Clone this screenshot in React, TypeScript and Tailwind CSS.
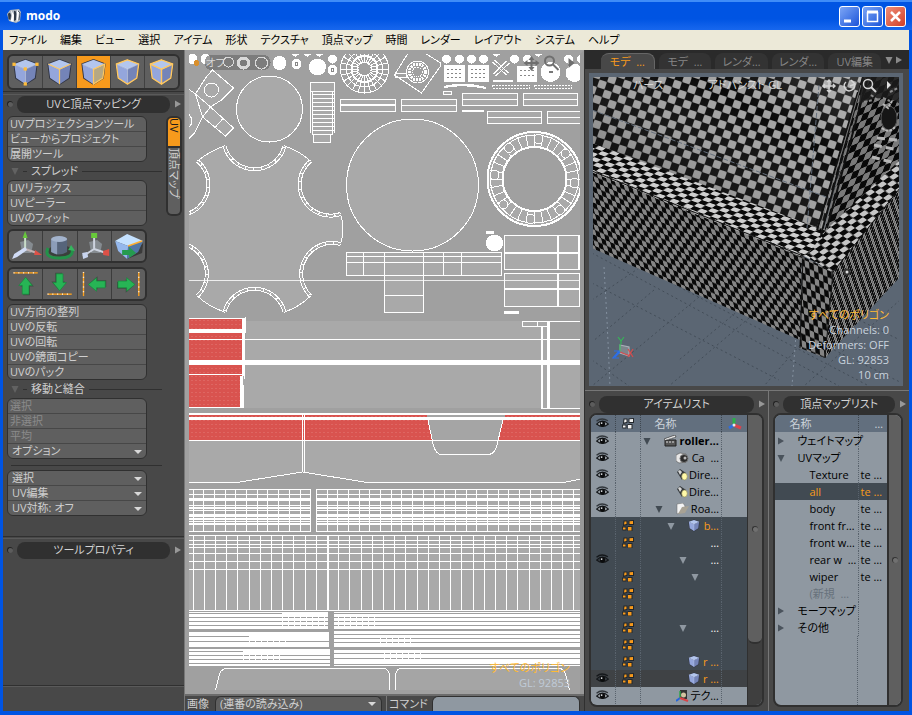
import React from 'react';

const menus = [
  'ファイル', '編集', 'ビュー', '選択', 'アイテム', '形状', 'テクスチャ',
  '頂点マップ', '時間', 'レンダー', 'レイアウト', 'システム', 'ヘルプ',
];

type CubeMode = 'vertex' | 'edge' | 'polygon' | 'item' | 'material' | 'plain';

const Cube = ({ mode, className }: { mode: CubeMode; className: string }) => (
  <svg viewBox="0 0 28 30" className={className} aria-hidden="true">
    <path d="M14 1 27 6 25 22 14 29 3 22 1 6Z" fill="#2f3342" />
    <path d="M14 2 26 6.500 14 12 2 6.500Z" fill="#b3c6ee" />
    <path d="M2 6.500 14 12V28L4 21.500Z" fill="#94a6dc" />
    <path d="M26 6.500 14 12V28L24 21.500Z" fill={mode === 'polygon' ? '#b5a884' : '#7484b8'} />
    <path d="M2 6.500 14 12 26 6.500M14 12V28" fill="none" stroke="#dce6fa" strokeWidth="0.6" />
    {mode === 'vertex' && (
      <g fill="#ffbd3a">
        <rect x="0" y="5" width="3.500" height="3.500" />
        <rect x="24.500" y="5" width="3.500" height="3.500" />
        <rect x="12" y="10" width="3.500" height="3.500" />
        <rect x="12" y="26" width="3.500" height="3.500" />
      </g>
    )}
    {mode === 'edge' && <path d="M2 6.500 14 12 26 6.500M14 12V28" fill="none" stroke="#ffc860" strokeWidth="1.300" />}
    {mode === 'polygon' && <path d="M26 6.500 14 12V28L24 21.500Z" fill="none" stroke="#ffc860" strokeWidth="1.300" />}
    {(mode === 'item' || mode === 'material') && (
      <path d="M14 2 26 6.500 24 21.500 14 28 4 21.500 2 6.500Z" fill="none" stroke="#ffc860" strokeWidth="1.500" />
    )}
    {mode === 'material' && <path d="M2 6.500 14 12 26 6.500M14 12V28" fill="none" stroke="#ffc860" strokeWidth="1.500" />}
  </svg>
);

const Eye = ({ dark = false }: { dark?: boolean }) => (
  <svg viewBox="0 0 12 10" className="mx-auto block h-[11px] w-[13px]" role="img" aria-label="visible">
    <path d="M0.500 3Q5-1 11 2.500" fill="none" stroke={dark ? '#15181b' : '#33383d'} strokeWidth="1.2" />
    <path d="M0.500 5.500Q6 0 11.500 5.500 6 10 0.500 5.500Z" fill={dark ? '#3a4046' : '#aab0b6'} stroke="#15181b" />
    <circle cx="6" cy="5.400" r="2.500" fill="#0b0c0d" />
    <circle cx="5.200" cy="4.600" r="0.800" fill="#e6e9ec" />
  </svg>
);

const Blocks = ({ color }: { color: string }) => (
  <svg viewBox="0 0 12 12" className="mx-auto block size-3" aria-hidden="true">
    <path d="M1.500 0.500H5.500V5L1 6ZM6.500 0.500 12 0V5H6.500ZM0 6.500H4.500V10.500H0.500ZM5.500 6H10.500V11H5.500Z" fill="#23272b" />
    <path d="M2.500 1.500H4.500V4L2 4.500ZM7.500 1.200 11 1V4H7.500ZM1 7.500H3.500V9.500H1ZM6 7H9.500V10.500H6Z" fill={color} />
  </svg>
);

const Axis = () => (
  <svg viewBox="0 0 14 12" className="mx-auto block h-3 w-3.5" aria-hidden="true">
    <path d="M6 0V7" stroke="#2bb04b" strokeWidth="3" />
    <path d="M6 7 1 10" stroke="#2f6fe0" strokeWidth="3" />
    <path d="M6 7 13 10" stroke="#d8434d" strokeWidth="3" />
    <circle cx="6" cy="7" r="1.500" fill="#e3e9ee" />
  </svg>
);

const Triangle = ({ open, className }: { open: boolean; className: string }) => (
  <svg viewBox="0 0 8 8" className={`size-2 shrink-0 ${className}`} aria-hidden="true">
    <path d={open ? 'M0.500 1H7.500L4 8Z' : 'M1 0.500 7 4 1 7.500Z'} fill="currentColor" />
  </svg>
);

const PanelTitle = ({ text }: { text: string }) => (
  <div className="flex h-[18px] shrink-0 items-center gap-1 pr-0.5 pl-1">
    <span className="size-1.5 shrink-0 rounded-full border-t border-l border-[#222] bg-[#5c5c5c]" />
    <h2 className="h-[17px] min-w-0 flex-1 rounded-lg bg-[#303030] text-center text-[11px] leading-4 whitespace-nowrap text-[#d4d4d4]">{text}</h2>
    <Triangle open={false} className="text-[#989898]" />
  </div>
);

const groupClass = 'mx-1 w-[140px] rounded-md border border-[#303030] bg-[#5f5f5f] text-[11px] leading-[14px] text-[#cfcfcf]';

const CommandGroup = ({ items }: { items: string[] }) => (
  <div className={groupClass}>
    {items.map((item) => (
      <button
        key={item}
        type="button"
        className="block h-[15px] w-full border-b border-[#474747] px-0.5 text-left whitespace-nowrap last:h-3.5 last:border-b-0"
      >
        {item}
      </button>
    ))}
  </div>
);

const DropRow = ({ label }: { label: string }) => (
  <div className="relative h-[15px] border-b border-[#474747] last:h-3.5 last:border-b-0">
    <select aria-label={label} className="block h-3.5 w-full appearance-none px-1 leading-[14px] outline-none">
      <option>{label}</option>
    </select>
    <svg viewBox="0 0 8 4" className="pointer-events-none absolute top-1.5 right-1 h-1 w-2" aria-hidden="true">
      <path d="M0 0H8L4 4Z" fill="#d8d8d8" />
    </svg>
  </div>
);

const Section = ({ text }: { text: string }) => (
  <div className="mr-1 ml-2 flex h-3.5 items-center gap-1 text-[#cfcfcf]">
    <Triangle open className="text-[#626262]" />
    <span className="h-px w-1 bg-[#303030]" />
    <h3 className="text-[11px] leading-[14px]">{text}</h3>
    <span className="h-px flex-1 bg-[#303030]" />
  </div>
);

const modes: CubeMode[] = ['vertex', 'edge', 'polygon', 'item', 'material'];

const toolIcons = [
  {
    name: '軸',
    art: (
      <>
        <path d="M11 11 19 9 24 13 22 22 13 22Z" fill="#858b90" />
        <path d="M16 18V4" stroke="#c8dcc8" strokeWidth="2" />
        <path d="M13.500 7 16 0 18.500 7Z" fill="#67c83c" />
        <path d="M16 18 28 22" stroke="#c1b2b2" strokeWidth="2" />
        <path d="M26 19 33 24 25 24Z" fill="#dc5147" />
        <path d="M16 16 5 23 3 28 8 26 18 19Z" fill="#d1dcf6" />
      </>
    ),
  },
  {
    name: '円筒',
    art: (
      <>
        <ellipse cx="17" cy="20" rx="12" ry="6" fill="#3a403b" />
        <path d="M5 17Q0 27 16 27 31 27 29 18" fill="none" stroke="#239149" strokeWidth="3" />
        <path d="M8 8V21Q15 26 24 21V8Z" fill="#56647a" />
        <path d="M8 8V21L14 23.500V9Z" fill="#8c9db9" />
        <ellipse cx="16" cy="8" rx="8" ry="3" fill="#a3b3cc" />
        <path d="M25 19 28 14 32 20Z" fill="#36b55e" />
      </>
    ),
  },
  {
    name: '拡大縮小',
    art: (
      <>
        <path d="M11 11 19 9 24 13 22 22 13 22Z" fill="#858b90" />
        <path d="M16 18V4M16 18 28 22M16 18 5 25" stroke="#cdd3df" strokeWidth="2" />
        <rect x="13" y="2" width="6" height="5" fill="#68ca3a" />
        <path d="M25 20 31 18V25L25 24Z" fill="#dc5147" />
        <path d="M4 22 9 21 10 26 5 28Z" fill="#c8d4ee" />
      </>
    ),
  },
  {
    name: '移動',
    art: (
      <>
        <path d="M15 28 30 22 31 12Z" fill="#3a3a3a" />
        <path d="M3 10 15 3 31 10 16 15Z" fill="#c4e1ff" />
        <path d="M3 10 16 15 15 28 6 20Z" fill="#94b7ec" />
        <path d="M31 10 16 15 15 28 26 21Z" fill="#5276a6" />
        <path d="M16 15 30 10" stroke="#ffad2d" strokeWidth="1.500" />
        <path d="M10 19H17V16L24 22 17 27V24H10Z" fill="#259b4e" />
      </>
    ),
  },
];

const arrows = [
  { name: '上揃え', turn: 0, guide: 'M4 4H29', x: 0, y: 1 },
  { name: '下揃え', turn: 180, guide: 'M4 26H29', x: 0, y: -2 },
  { name: '左揃え', turn: 270, guide: 'M5 3V28', x: 2, y: 0 },
  { name: '右揃え', turn: 90, guide: 'M27 3V28', x: -2, y: 0 },
];

const LeftPanel = () => (
  <aside className="flex w-[182px] shrink-0 flex-col border-r border-[#777] bg-[#484848]">
    <div className="mx-1 mt-1 flex h-[36px] shrink-0 rounded-md border-2 border-[#303030] bg-[#5f5f5f]">
      {modes.map((mode) => (
        <button
          key={mode}
          type="button"
          aria-label={mode}
          className={`flex flex-1 items-center justify-center border-r border-[#414141] last:border-r-0 ${mode === 'polygon' ? 'bg-[#f79a1c]' : ''}`}
        >
          <Cube mode={mode} className="h-[28px] w-[27px]" />
        </button>
      ))}
    </div>
    <div className="mt-px h-1 shrink-0 border-t border-b border-t-[#303030] border-b-[#5a5a5a]" />
    <PanelTitle text="UVと頂点マッピング" />
    <div className="flex items-start pt-[3px]">
      <div className="flex min-w-0 flex-1 flex-col gap-0.5">
        <CommandGroup items={['UVプロジェクションツール', 'ビューからプロジェクト', '展開ツール']} />
        <Section text="スプレッド" />
        <CommandGroup items={['UVリラックス', 'UVピーラー', 'UVのフィット']} />
        <div className="mx-1 my-px flex h-[34px] w-[140px] rounded-md border-2 border-[#303030] bg-[#5f5f5f]">
          {toolIcons.map((tool) => (
            <button key={tool.name} type="button" aria-label={tool.name} className="flex-1 border-r border-[#3c3c3c] last:border-r-0">
              <svg viewBox="0 0 33 30" className="h-[30px] w-full">{tool.art}</svg>
            </button>
          ))}
        </div>
        <div className="mx-1 my-px flex h-[34px] w-[140px] rounded-md border-2 border-[#303030] bg-[#5f5f5f]">
          {arrows.map((a) => (
            <button key={a.name} type="button" aria-label={a.name} className="flex-1 border-r border-[#3c3c3c] last:border-r-0">
              <svg viewBox="0 0 33 31" className="h-[30px] w-full">
                <path d={a.guide} stroke="#ffa21d" strokeWidth="1.400" />
                <path d={a.guide} stroke="#fff" strokeWidth="1.400" strokeDasharray="1 4" />
                <g transform={`translate(${a.x} ${a.y}) rotate(${a.turn} 16.5 16)`}>
                  <path d="M18 9 25 17H21V26H14V17H11Z" fill="#303830" opacity=".6" />
                  <path d="M16.500 7.500 23.500 16H20V25H13V16H9.500Z" fill="#27b455" stroke="#168a3d" strokeWidth=".7" />
                </g>
              </svg>
            </button>
          ))}
        </div>
        <CommandGroup items={['UV方向の整列', 'UVの反転', 'UVの回転', 'UVの鏡面コピー', 'UVのパック']} />
        <Section text="移動と縫合" />
        <div className={groupClass}>
          {['選択', '非選択', '平均'].map((item) => (
            <button key={item} type="button" disabled className="block h-[15px] w-full border-b border-[#474747] px-0.5 text-left text-[#8b8b8b]">
              {item}
            </button>
          ))}
          <DropRow label="オプション" />
        </div>
        <div className="mt-1 mr-1 mb-0.5 ml-2 h-px bg-[#303030]" />
        <div className={groupClass}>
          <DropRow label="選択" />
          <DropRow label="UV編集" />
          <DropRow label="UV対称: オフ" />
        </div>
      </div>
      <div className="mr-0.5 flex w-4 shrink-0 flex-col text-[11px] leading-3" role="tablist">
        <button type="button" role="tab" aria-selected="true" className="flex h-8 items-center rounded-t-md border-2 border-[#303030] bg-[#f79a1c] py-0.5 text-[#1c1c1c] [text-orientation:sideways] [writing-mode:vertical-rl]">UV</button>
        <button type="button" role="tab" aria-selected="false" className="flex h-[68px] items-center rounded-b-md border-2 border-t-0 border-[#303030] bg-[#5f5f5f] py-1 text-[#cfcfcf] [text-orientation:sideways] [writing-mode:vertical-rl]">頂点マップ</button>
      </div>
    </div>
    <div className="mt-5 mb-0.5 h-[3px] shrink-0 border-t border-b border-t-[#303030] border-b-[#5a5a5a]" />
    <PanelTitle text="ツールプロパティ" />
    <div className="flex-1" />
    <div className="mb-6 h-0.5 border-t border-b border-t-[#303030] border-b-[#5a5a5a]" />
  </aside>
);

const range = (n: number) => Array.from({ length: n }, (_, i) => i);

const notches = [
  'M225 146A31 31 0 0 0 285 146',
  'M311 161A31 31 0 0 0 341 214',
  'M341 244A31 31 0 0 0 311 296',
  'M285 312A31 31 0 0 0 225 312',
  'M198 296A31 31 0 0 0 168 244',
  'M168 214A31 31 0 0 0 198 161',
];

const UvCanvas = () => (
  <svg viewBox="189 54 392 640" preserveAspectRatio="xMidYMid slice" className="h-full w-full" shapeRendering="crispEdges" role="img" aria-label="UV layout">
    <defs>
      <pattern id="redDots" width="4" height="4" patternUnits="userSpaceOnUse">
        <rect width="4" height="4" fill="#d9534f" />
        <rect width="1" height="1" fill="#e27a74" />
      </pattern>
    </defs>
    <rect x="189" y="54" width="392" height="640" fill="#a0a0a0" />

    {/* small parts along the top */}
    <g fill="#fff">
      <circle cx="193" cy="59" r="5" />
      <circle cx="206" cy="59" r="5" />
      <circle cx="280" cy="63" r="7" />
      <circle cx="297" cy="64" r="5" />
      <circle cx="318" cy="67" r="8.5" />
      <circle cx="333" cy="59" r="4.5" />
      <circle cx="333" cy="70" r="5" />
      <path d="M292 54H300L296 57ZM304 54H312L308 57ZM316 54H324L320 57Z" />
      {[447, 460, 472, 484, 515, 528, 569, 582].map((x) => <circle key={x} cx={x} cy="59" r="4.5" />)}
      <rect x="444" y="65" width="21" height="17" />
      <rect x="468" y="65" width="21" height="17" />
      <rect x="517" y="66" width="20" height="16" />
      <circle cx="551" cy="72" r="10" />
      <circle cx="575" cy="73" r="9" />
      <path d="M444 86Q465 81 487 87L486 89Q465 84 445 88ZM493 80H513V82H493ZM493 54H501L497 57ZM535 54H543L539 57Z" />
    </g>
    <circle cx="197" cy="63" r="3" fill="#d98f2c" />
    <circle cx="297" cy="64" r="1.5" fill="none" stroke="#888" />
    <circle cx="333" cy="70" r="1.5" fill="none" stroke="#888" />
    <path d="M447 69H462M447 73H462M447 77H462M471 69H486M471 73H486M471 77H486M520 70H534M520 75H534" stroke="#888" strokeDasharray="2 2" />
    <rect x="549" y="71" width="4" height="2" fill="#777" />
    <g fill="none" stroke="#fff">
      <path d="M493 62 507 75M495 60 509 73M507 61 494 74M510 63 496 76" />
      <path d="M493 85H530V88H493ZM535 85H572V88H535Z" strokeDasharray="2 1" />
      <circle cx="365" cy="69" r="24" />
      <circle cx="365" cy="69" r="18" />
      <circle cx="365" cy="69" r="13" strokeWidth="2" />
      <circle cx="365" cy="69" r="7" />
      {range(24).map((i) => <path key={i} d="M365 63V45" transform={`rotate(${i * 15} 365 69)`} />)}
      <path d="M408 54 395 75 422 93 441 66V63L427 54M396 73H407V77H396Z" />
      <circle cx="418" cy="72" r="11" />
      <circle cx="418" cy="72" r="8" strokeWidth="3" strokeDasharray="2 1" />
      <circle cx="418" cy="72" r="5" strokeDasharray="1 1" />
    </g>
    <rect x="205" y="55" width="66" height="15" rx="7" fill="#686868" opacity=".65" />
    <text x="206" y="67" fontSize="11" fill="#d4d4d4">オフ</text>
    <g fill="none" stroke="#d9d9d9">
      <circle cx="229" cy="62" r="5" />
      <circle cx="244" cy="63" r="5" strokeWidth="3" />
      <circle cx="262" cy="63" r="6" />
    </g>

    {/* rotated cross and the two upper discs */}
    <g fill="#a9a9a9" stroke="#fff">
      <path d="M189 89 196 94 206 78 213 70 234 88 222 100 211 107 234 128 226 136 203 117 195 133 189 139" />
      <path d="M196 94 203 117 211 107M196 94 211 107M216 127 224 118" fill="none" />
      <circle cx="212" cy="90" r="7" />
      <path d="M189 114Q196 121 189 128" />
      <circle cx="270" cy="109" r="33" />
      <circle cx="413" cy="185" r="66" />
    </g>

    {/* ladder */}
    <g fill="#a9a9a9" stroke="#fff">
      <path d="M311 82H335V91H311ZM313 91H333V134H313ZM314 134H331V142H314Z" />
      <path d="M313 94H334M313 98H334M313 102H334M313 106H334M313 110H334M313 114H334M313 118H334M313 122H334M313 126H334M313 130H334" />
      <path d="M311 91V133M335 91V133" fill="none" />
    </g>

    {/* strips */}
    <g fill="#a9a9a9" stroke="#fff">
      <path d="M341 99H396V111H341ZM341 104H396M402 99H457V111H402ZM402 105H457M463 93H518V105H463ZM463 99H518M524 93H578V105H524ZM524 99H578M488 111H542V123H488ZM488 117H542M548 111H582V123H548ZM548 117H582M444 91H452V94H444Z" />
      <path d="M462 111H484M341 105H396" strokeWidth="2" />
    </g>

    {/* star plate */}
    <path
      d="M198 161Q210 151 225 146A31 31 0 0 0 285 146Q300 151 311 161A31 31 0 0 0 341 214Q346 229 341 244A31 31 0 0 0 311 296Q300 307 285 312A31 31 0 0 0 225 312Q208 306 198 296A31 31 0 0 0 168 244V214A31 31 0 0 0 198 161Z"
      fill="#a9a9a9"
      stroke="#fff"
    />
    {notches.map((d) => (
      <g key={d} fill="none">
        <path d={d} stroke="#fff" strokeWidth="4" />
        <path d={d} stroke="#a9a9a9" strokeWidth="2" strokeDasharray="7 1" />
      </g>
    ))}

    {/* bolt ring */}
    <g fill="none" stroke="#fff">
      <circle cx="535" cy="179" r="40" stroke="#a9a9a9" strokeWidth="15" />
      <circle cx="535" cy="179" r="47" strokeWidth="2" />
      <circle cx="535" cy="179" r="44" />
      <circle cx="535" cy="179" r="32" strokeWidth="2" />
      {range(32).map((i) => <path key={i} d="M535 147V134" transform={`rotate(${i * 11.25} 535 179)`} />)}
      {range(8).map((i) => <circle key={i} cx="539" cy="139" r="4.5" fill="#a9a9a9" transform={`rotate(${i * 45} 535 179)`} />)}
    </g>

    {/* tables */}
    <g fill="#a9a9a9" stroke="#fff">
      <path d="M347 252H502V275H347ZM347 256H502M347 262H502M364 252V275M385 252V275M424 252V275M444 252V275M462 252V275M385 275V312H424V275M385 295H424" />
      <path d="M505 235H580V269H505ZM505 273H580V306H505Z" />
      <path d="M505 253H580M558 235V269M505 289H580M558 273V306M579 235V269" strokeWidth="2" />
      <path d="M487 231H494V233H487ZM505 311H519V313H505Z" fill="#fff" />
      <circle cx="495" cy="243" r="8" fill="#fff" />
    </g>
    <path d="M189 280.5H581" stroke="#fff" opacity=".8" />

    {/* wide panels and selection */}
    <rect x="189" y="339" width="392" height="69" fill="#a9a9a9" />
    <rect x="246" y="321" width="301" height="87" fill="#a9a9a9" />
    <path d="M189 318H242V407H189Z" fill="url(#redDots)" />
    <g fill="none" stroke="#fff">
      <path d="M189 318.5H244M189 339.5H581M189 374.5H242M189 407.5H242M523 321.5H581M523 321V326H548M538 321V326M541 408.5H581" />
      <path d="M189 331H244" strokeWidth="4" />
      <path d="M189 362.5H581" strokeWidth="5" />
      <path d="M244 318V376M242 376V408M549 321V408" strokeWidth="3" />
      <path d="M542 326V408" strokeWidth="2" />
      <path d="M246 317V333M245 371V379M244 385V408" />
    </g>
    <rect x="189" y="413" width="392" height="70" fill="#a9a9a9" />
    <path d="M189 482H237L303 472 368 482H564L581 479V489H189Z" fill="#a0a0a0" />
    <path d="M189 413H581V440H189Z" fill="url(#redDots)" />
    <path d="M427 413H506L496 449Q494 455 490 455H441Q437 454 435 449Z" fill="#a5a5a5" />
    <g fill="none" stroke="#fff">
      <path d="M189 414H581" strokeWidth="2" />
      <path d="M189 418.500H581" strokeWidth="3" />
      <path d="M189 440.500H581M302.500 413V472M304.500 413V472M189 482.500H237L303 472 368 482.500H564L581 479" />
      <path d="M428 418 434 446Q437 454 441 454.500H490Q495 453 497 447L504 418" />
    </g>

    {/* dense strips */}
    <rect x="189" y="489" width="122" height="43" fill="#a9a9a9" />
    <rect x="316" y="489" width="265" height="43" fill="#a9a9a9" />
    <g fill="none" stroke="#fff">
      {[
        { x: 189, w: 122 },
        { x: 316, w: 265 },
      ].map(({ x, w }) => (
        <g key={x}>
          {[489.5, 494.5, 500.5, 505.5, 510.5, 516.5, 521.5, 531.5].map((y) => <path key={y} d={`M${x} ${y}h${w}`} />)}
          {[498.5, 507.5, 514.5, 518.5, 523.5].map((y) => <path key={y} d={`M${x} ${y}h${w}`} strokeWidth="2" />)}
        </g>
      ))}
      {range(11).map((i) => <path key={i} d={`M${193.5 + i * 10.7} 489V532`} />)}
      <path d="M310.500 489V532M316.500 489V532" />
      {range(24).map((i) => <path key={i} d={`M${327.5 + i * 10.7} 489V532`} />)}
    </g>
    <rect x="189" y="535" width="392" height="76" fill="#a9a9a9" />
    <g fill="none" stroke="#fff">
      {range(36).map((i) => <path key={i} d={`M${193.5 + i * 11.2} 535V611`} />)}
      <path d="M189 535.500H581M189 540.500H581M189 544.500H581M189 547.500H581M189 553.500H581M189 561.500H581M189 569.500H581M189 610.500H581" />
      <path d="M328.500 535V611" strokeWidth="2" />
    </g>
    <path d="M189 612H328V629H189ZM334 612H581V629H334ZM189 632H329V647H189ZM334 631H581V647H334ZM189 649H330V666H189ZM334 650H581V666H334Z" fill="#fff" />
    <g fill="none" stroke="#9f9f9f">
      <path d="M189 613.500H282M334 613.500H581M189 617.500H328M334 617.500H581M189 621.500H328M334 621.500H581M189 625.500H328M334 625.500H581M189 636.500H249M189 641.500H329M334 634.500H581M334 638.500H581M334 642.500H581M189 651.500H243M189 655.500H330M189 659.500H330M189 663.500H330M334 653.500H581M334 658.500H581M334 664.500H581" />
    </g>
    <g fill="none" stroke="#fff" strokeDasharray="1 5">
      <path d="M282 613.500H328M282 617.500H328M282 621.500H328M282 625.500H328M249 641.500H290M243 655.500H285M243 659.500H285M338 617.500H380M338 621.500H380M338 625.500H380M380 638.500H415M380 642.500H415M384 653.500H425M384 658.500H425" strokeWidth="2" />
    </g>
    <path d="M216 690 220 674Q222 668 230 668H383Q390 669 390 676V690ZM396 690V676Q396 668 404 668H558Q564 668 566 674L570 690Z" fill="#a5a5a5" />
    <path d="M216 690 220 674Q222 668 230 668H383Q390 669 390 676V690M396 690V676Q396 668 404 668H558Q564 668 566 674L570 690" fill="none" stroke="#fff" />
    <g fill="#6f6f6f" shapeRendering="auto">
      <path d="M532 56 535 60H533V62H536V60L540 63 536 66V64H533V67H535L532 71 529 67H531V64H528V66L524 63 528 60V62H531V60H529Z" />
      <path d="M569 58 575 63 569 68Z" />
      <circle cx="550" cy="61" r="4.500" fill="none" stroke="#6f6f6f" strokeWidth="2" />
      <path d="M553 64 559 70" stroke="#6f6f6f" strokeWidth="2" />
    </g>
  </svg>
);

const UvView = () => (
  <main className="flex min-w-0 flex-1 flex-col bg-[#484848]">
    <div className="relative min-h-0 flex-1 border-x-4 border-t-4 border-[#a0a0a0] border-r-[#999]">
      <UvCanvas />
      <div className="absolute right-2.5 bottom-1 text-right text-[11px] leading-[15px]">
        <p className="text-[#ffba33]">すべてのポリゴン</p>
        <p className="text-[#c0cbd8]">GL: 92853</p>
      </div>
    </div>
    <div className="flex h-[17px] shrink-0 items-end border-t-2 border-[#6c6c6c] text-[11px] leading-[15px] text-[#cfcfcf]">
      <div className="flex flex-1 items-center gap-1.5 pl-0.5">
        <label htmlFor="image">画像</label>
        <div className="relative flex-1">
          <select id="image" className="block h-[15px] w-full appearance-none rounded-t-md border border-b-0 border-[#303030] bg-[#5f5f5f] px-1 leading-3.5 outline-none">
            <option>(連番の読み込み)</option>
          </select>
          <svg viewBox="0 0 8 4" className="pointer-events-none absolute top-1.5 right-1.5 h-1 w-2" aria-hidden="true">
            <path d="M0 0H8L4 4Z" fill="#d8d8d8" />
          </svg>
        </div>
      </div>
      <div className="ml-1 flex flex-1 items-center gap-1 border-l border-[#777] pl-0.5">
        <label htmlFor="command">コマンド</label>
        <input id="command" type="text" className="mr-1 h-[15px] min-w-0 flex-1 rounded-t-md border border-b-0 border-[#303030] bg-[#8f98a1] px-1 outline-none" />
      </div>
    </div>
  </main>
);

const Checker = ({ id, matrix, light }: { id: string; matrix: string; light: string }) => (
  <pattern id={id} width="2" height="2" patternUnits="userSpaceOnUse" patternTransform={`matrix(${matrix})`}>
    <rect width="2" height="2" fill="#090909" />
    <rect x="1" width="1" height="1" rx="0.15" fill={light} />
    <rect y="1" width="1" height="1" rx="0.15" fill={light} />
  </pattern>
);

const ModelView = () => (
  <svg viewBox="593 77 308 309" preserveAspectRatio="xMidYMid slice" className="h-full w-full" role="img" aria-label="3D view">
    <defs>
      <Checker id="wall" matrix="7.500 2.500 -2.500 7.500 593 77" light="#a2a2a2" />
      <Checker id="ledge" matrix="7 2.500 -4 3 593 143" light="#cfcfcf" />
      <Checker id="front" matrix="4.500 2 1.500 6 593 170" light="#858585" />
      <Checker id="corner" matrix="4.500 2 0.500 7 801 258" light="#858585" />
      <Checker id="side" matrix="2.500 -3 -1.500 6 832 273" light="#8a8a8a" />
      <Checker id="sideLedge" matrix="6 -4 4 3 832 227" light="#c6c6c6" />
      <Checker id="inner" matrix="7 -3 -3 8 850 120" light="#7a7a7a" />
      <linearGradient id="wallShade" x1="0" y1="1" x2="1" y2="0">
        <stop offset="0.2" stopColor="#000" stopOpacity="0.25" />
        <stop offset="0.7" stopColor="#fff" stopOpacity="0" />
        <stop offset="1" stopColor="#fff" stopOpacity="0.2" />
      </linearGradient>
    </defs>
    <rect x="593" y="77" width="308" height="309" fill="#5b6673" />
    <g stroke="#434d58" strokeDasharray="2 3" fill="none">
      <path d="M593 283 780 380M593 360 630 386M640 266 870 386M593 253 840 386M700 297 593 386M750 318 670 386M655 290 593 342M640 268 593 300M801 345 765 386M740 310 680 360M860 320 901 340M835 350 901 382M901 300 805 386" />
      <path d="M605 267 608 320 611 386M797 335 793 386" stroke="#8491a0" />
    </g>
    <path d="M593 77H864L822 235 593 150Z" fill="url(#wall)" />
    <path d="M593 77H864L822 235 593 150Z" fill="url(#wallShade)" />
    <path d="M593 143 822 229 868 222 834 272 805 256 593 171Z" fill="url(#ledge)" />
    <path d="M863 77H901V165L825 232Z" fill="url(#inner)" />
    <path d="M901 160 830 227 808 255 834 274 901 190Z" fill="url(#sideLedge)" />
    <path d="M593 170 803 256 801 340 593 248Z" fill="url(#front)" />
    <path d="M803 256 834 272 826 358 801 348Z" fill="url(#corner)" />
    <path d="M834 272 901 188V277L826 358Z" fill="url(#side)" />
    <path d="M593 171 804 256" stroke="#b7b7b7" strokeWidth="2.500" strokeDasharray="5 6" />
    <g stroke="#111" fill="none">
      <path d="M593 171 804 256 801 348M834 272 826 358" />
      <path d="M864 77 822 235M859 92 818 230M869 77 828 228" strokeWidth="2" />
      <path d="M867 77 825 230M862 85 820 230" stroke="#777" strokeWidth="1" />
      <path d="M834 272 901 188" />
    </g>
    <path d="M593 110 830 198M820 85 808 228" stroke="#66707d" strokeDasharray="5 2" fill="none" />
    <path d="M863 77H901V104Q885 92 860 104Z" fill="#1c1c1c" opacity=".85" />
    <path d="M872 95 880 101M891 92 899 88M865 102 874 100M884 98 891 101" stroke="#8b8b8b" strokeWidth="2" strokeDasharray="3 2" />
    <ellipse cx="890" cy="118" rx="8" ry="12" fill="#161616" stroke="#555" />
    <path d="M884 104 889 108 893 101M883 128Q890 134 896 127" stroke="#b8b8b8" strokeWidth="2" strokeDasharray="3 1" fill="none" />
    <path d="M875 145 899 150M873 157 896 163M878 138 899 140" stroke="#b5b5b5" strokeWidth="3" strokeDasharray="8 4" />
    <circle cx="848" cy="272" r="3.500" fill="#333" />
    <circle cx="848" cy="272" r="1.500" fill="#ddd" />
    {/* axis gizmo */}
    <g fill="none" strokeWidth="1.200">
      <path d="M621 345 630 347V356L621 353Z" fill="#7e858c" stroke="#a9b0b8" />
      <path d="M621 352V344M619 337 622 341 625 337M622 341V344" stroke="#35b557" />
      <path d="M621 352 631 356M629 349 634 357M634 349 629 357" stroke="#d84b4b" />
      <path d="M621 352 616 357M615 351H620L614 358H620" stroke="#2c6fe8" />
    </g>
    {/* view controls */}
    <g fill="none" stroke="#d5d5d5" strokeWidth="1.400">
      <path d="M830 80V92M824 86H836M828 82 830 80 832 82M828 90 830 92 832 90M826 84 824 86 826 88M834 84 836 86 834 88" />
      <path d="M847 82A5 5 0 1 0 855 84M852 80 856 84 851 86" />
      <circle cx="869" cy="84" r="4.500" />
      <path d="M872 87 877 92" strokeWidth="2" />
      <path d="M888 81V89L892 85Z" fill="#e0e0e0" stroke="none" />
    </g>
  </svg>
);

const viewTabs = ['モデ  …', 'モデ  …', 'レンダ…', 'レンダ…', 'UV編集'];

type Item = {
  eye?: boolean;
  lock?: boolean;
  tri?: boolean;
  depth: string;
  icon?: 'clap' | 'camera' | 'light' | 'folder' | 'cube' | 'texture';
  label: string;
  tone: 'light' | 'dark' | 'last';
};

const items: Item[] = [
  { eye: true, tri: true, depth: 'pl-0.5', icon: 'clap', label: 'roller…', tone: 'light' },
  { eye: true, depth: 'pl-[35px]', icon: 'camera', label: 'Ca  …', tone: 'light' },
  { eye: true, depth: 'pl-[35px]', icon: 'light', label: 'Dire…', tone: 'light' },
  { eye: true, depth: 'pl-[35px]', icon: 'light', label: 'Dire…', tone: 'light' },
  { eye: true, tri: true, depth: 'pl-3.5', icon: 'folder', label: 'Roa…', tone: 'light' },
  { lock: true, tri: true, depth: 'pl-[26px]', icon: 'cube', label: 'b…', tone: 'dark' },
  { lock: true, depth: 'pl-[26px]', label: '…', tone: 'dark' },
  { eye: true, tri: true, depth: 'pl-[38px]', label: '…', tone: 'dark' },
  { lock: true, tri: true, depth: 'pl-[50px]', label: '', tone: 'dark' },
  { lock: true, depth: 'pl-[26px]', label: '', tone: 'dark' },
  { lock: true, depth: 'pl-[26px]', label: '', tone: 'dark' },
  { lock: true, tri: true, depth: 'pl-[38px]', label: '…', tone: 'dark' },
  { lock: true, depth: 'pl-[26px]', label: '', tone: 'dark' },
  { lock: true, depth: 'pl-[47px]', icon: 'cube', label: 'r …', tone: 'dark' },
  { eye: true, lock: true, depth: 'pl-[47px]', icon: 'cube', label: 'r …', tone: 'last' },
  { eye: true, depth: 'pl-[35px]', icon: 'texture', label: 'テク…', tone: 'light' },
];

const ItemIcon = ({ icon }: { icon: NonNullable<Item['icon']> }) => {
  if (icon === 'cube') return <Cube mode="plain" className="h-[13px] w-3 shrink-0" />;
  return (
    <svg viewBox="0 0 13 12" className="h-3 w-[13px] shrink-0" aria-hidden="true">
      {icon === 'clap' && (
        <>
          <path d="M1 5H12V11H1Z" fill="#555" stroke="#222" />
          <path d="M0 4 11 0 12 2 1 5.500Z" fill="#eee" stroke="#222" strokeWidth=".6" />
          <path d="M3 3 4 4.500M6 2 7 3.500M9 1 10 2.500M3 6V8M6 6V8M9 6V8" stroke="#ddd" />
        </>
      )}
      {icon === 'camera' && (
        <>
          <path d="M0 3 4 1 10 2V10L3 11 0 9Z" fill="#e7e7e7" stroke="#555" strokeWidth=".6" />
          <circle cx="8" cy="6.500" r="4" fill="#2b2b2b" stroke="#777" />
          <circle cx="9" cy="6" r="1.500" fill="#bbb" />
        </>
      )}
      {icon === 'light' && (
        <>
          <path d="M1 3 4 0 10 4 6 11Z" fill="#34383a" />
          <path d="M2 2 4 1 6 3 4 6Z" fill="#d6d6d6" />
          <ellipse cx="8.500" cy="7.500" rx="2.800" ry="3.500" fill="#fff9a8" stroke="#8d8a5a" strokeWidth=".6" />
        </>
      )}
      {icon === 'folder' && (
        <>
          <path d="M1 1 7 0 9 3 8 8 1 11Z" fill="#f4f4f4" stroke="#666" strokeWidth=".5" />
          <path d="M2 11 6 4 13 3 9 10Z" fill="#a8a294" />
        </>
      )}
      {icon === 'texture' && (
        <>
          <path d="M4 0H11V9H4Z" fill="#333" />
          <circle cx="7.500" cy="5" r="2.500" fill="#d2c3a0" />
          <path d="M4 1V8" stroke="#31a34c" strokeWidth="1.500" />
          <path d="M4 8 0 11" stroke="#2466db" strokeWidth="2" />
          <path d="M4 8 12 11" stroke="#d84347" strokeWidth="2" />
        </>
      )}
    </svg>
  );
};

const rowTones = {
  light: 'bg-[#8f98a1] text-black',
  dark: 'bg-[#414a52] text-[#f7f7f7]',
  last: 'bg-[#3f4245] text-[#f7f7f7]',
};

const ItemList = () => (
  <section className="flex min-w-0 flex-[184] flex-col border-r border-[#777] pt-1">
    <PanelTitle text="アイテムリスト" />
    <div className="mx-1 mb-1 flex min-h-0 flex-1 overflow-hidden rounded-lg border-2 border-[#303030] bg-[#8f98a1]">
      <table className="w-0 flex-1 table-fixed border-collapse self-start text-[11px] leading-4">
        <colgroup>
          <col className="w-[24px]" />
          <col className="w-[25px]" />
          <col />
          <col className="w-[26px]" />
        </colgroup>
        <thead>
          <tr className="h-[17px] bg-[#626f7e] text-[#cdd4db]">
            <th className="border-r border-dotted border-[#3e4750] p-0"><Eye /></th>
            <th className="border-r border-dotted border-[#3e4750] p-0"><Blocks color="#f0f0f0" /></th>
            <th className="border-r border-dotted border-[#3e4750] p-0 pl-3.5 text-left font-normal">名称</th>
            <th className="p-0"><Axis /></th>
          </tr>
        </thead>
        <tbody>
          {items.map((item, i) => (
            <tr key={i} className={`h-[17px] ${rowTones[item.tone]}`}>
              <td className="border-r border-dotted border-[#59636d] p-0">{item.eye && <Eye dark={item.tone !== 'light'} />}</td>
              <td className="border-r border-dotted border-[#59636d] p-0">{item.lock && <Blocks color="#f79a1c" />}</td>
              <td className="border-r border-dotted border-[#59636d] p-0">
                <div className={`flex h-4 items-center ${item.depth}`}>
                  {item.tri && <Triangle open className={item.tone === 'light' ? 'text-[#414a52]' : 'text-[#8f98a1]'} />}
                  {item.tri && <span className="w-[13px] shrink" />}
                  {item.icon && <ItemIcon icon={item.icon} />}
                  <span
                    className={`ml-auto pr-0.5 whitespace-pre ${item.icon === 'clap' ? 'font-bold' : ''} ${item.icon === 'cube' ? 'text-[#f79a1c]' : ''}`}
                  >
                    {item.label}
                  </span>
                </div>
              </td>
              <td className="p-0" />
            </tr>
          ))}
        </tbody>
      </table>
      <div className="w-[15px] shrink-0 border-l border-[#303030] bg-[#3f3f3f]">
        <div className="flex h-[79%] items-center justify-center rounded-b-md border-b-2 border-[#303030] bg-[#5f5f5f]">
          <span className="size-1.5 rounded-full border-t border-l border-[#333] bg-[#707070]" />
        </div>
      </div>
    </div>
  </section>
);

const maps = [
  { name: 'ウェイトマップ', group: true, open: false },
  { name: 'UVマップ', group: true, open: true },
  { name: 'Texture', value: 'te …' },
  { name: 'all', value: 'te …', active: true },
  { name: 'body', value: 'te …' },
  { name: 'front fr…', value: 'te …' },
  { name: 'front w…', value: 'te …' },
  { name: 'rear w  …', value: 'te …' },
  { name: 'wiper', value: 'te …' },
  { name: '(新規  …', muted: true },
  { name: 'モーフマップ', group: true, open: false },
  { name: 'その他', group: true, open: false },
];

const MapList = () => (
  <section className="flex min-w-0 flex-[140] flex-col pt-1">
    <PanelTitle text="頂点マップリスト" />
    <div className="mr-1.5 mb-1 ml-1 flex min-h-0 flex-1 overflow-hidden rounded-lg border-2 border-[#303030] bg-[#8f98a1]">
      <div className="flex min-w-0 flex-1 flex-col">
        <table className="w-full table-fixed border-collapse text-[11px] leading-4 text-black">
          <colgroup>
            <col />
            <col className="w-[29px]" />
          </colgroup>
          <thead>
            <tr className="h-[17px] bg-[#626f7e] text-[#cdd4db]">
              <th className="border-r border-dotted border-[#3e4750] p-0 pl-3.5 text-left font-normal">名称</th>
              <th className="p-0 pr-1 text-right font-normal">…</th>
            </tr>
          </thead>
          <tbody>
            {maps.map((m) => (
              <tr key={m.name} className={`h-[17px] ${m.active ? 'bg-[#414a52] text-[#f79a1c]' : ''} ${m.muted ? 'text-[#68727c]' : ''}`}>
                <td className="border-r border-dotted border-[#59636d] p-0">
                  <div className={`flex h-4 items-center whitespace-pre ${m.group ? 'gap-3 pl-0.5' : 'pl-[34px]'}`}>
                    {m.group && <Triangle open={!!m.open} className="text-[#4a535c]" />}
                    {m.name}
                  </div>
                </td>
                <td className="p-0 pl-0.5 whitespace-nowrap">{m.value}</td>
              </tr>
            ))}
          </tbody>
        </table>
        <div className="flex flex-1">
          <span className="flex-1 border-r border-dotted border-[#59636d]" />
          <span className="w-[29px]" />
        </div>
      </div>
      <div className="flex w-3.5 shrink-0 items-center justify-center border-l-2 border-[#303030] bg-[#5f5f5f]">
        <span className="size-1.5 rounded-full border-t border-l border-[#333] bg-[#707070]" />
      </div>
    </div>
  </section>
);

const RightPanel = () => (
  <div className="flex w-[325px] shrink-0 flex-col border-l border-[#303030] bg-[#484848]">
    <div className="flex h-[19px] shrink-0 items-end bg-[#2a2a2a] pr-1.5 pl-4 text-[11px]" role="tablist">
      {viewTabs.map((tab, i) => (
        <button
          key={i}
          type="button"
          role="tab"
          aria-selected={i === 0}
          className={`mr-1 h-4 flex-1 rounded-t-lg leading-[15px] whitespace-pre ${i === 0 ? 'border-t border-r border-[#666] bg-[#484848] text-[#f79a1c]' : 'bg-[#333] text-[#858585]'}`}
        >
          {tab}
        </button>
      ))}
      <span className="flex items-center gap-0.5 self-center text-[#8a8a8a]">
        <Triangle open className="" />
        <Triangle open={false} className="" />
      </span>
    </div>
    <div className="relative mx-1 mt-1 mr-1.5 min-h-0 flex-1 border-4 border-b-0 border-[#5b6673]">
      <ModelView />
      <div className="absolute inset-x-0 top-0 flex text-[11px] leading-4 text-[#d5d5d5]">
        <span className="ml-10">パース</span>
        <span className="ml-11">アドバンスト GL</span>
      </div>
      <div className="absolute right-2.5 bottom-1 text-right text-[11px] leading-[15px] text-[#c9d3de]">
        <p className="text-[#ffba33]">すべてのポリゴン</p>
        <p>Channels: 0</p>
        <p>Deformers: OFF</p>
        <p>GL: 92853</p>
        <p>10 cm</p>
      </div>
    </div>
    <div className="mt-1 flex h-[321px] shrink-0 border-t border-[#777]">
      <ItemList />
      <MapList />
    </div>
  </div>
);

const TitleBar = () => (
  <header className="flex h-[30px] shrink-0 items-center gap-1 border-t-2 border-[#3f8cf8] bg-linear-to-b from-[#0054e3] from-60% to-[#1767ee] pr-1.5 pl-1.5">
    <svg viewBox="0 0 16 16" className="size-4" aria-hidden="true">
      <path d="M1 6 4 2 13 1 15 4 14 13 10 15 3 13Z" fill="#aeb6bf" />
      <path d="M2 6Q4 3 5 7L4.500 12 2.500 11ZM8 3Q10 2 10.500 6L10 12 8 13Z" fill="#303a48" />
      <path d="M5 2 8 7 7.500 14 4.500 13 6 8ZM11 2 13 4 12 12 10.500 14Z" fill="#fff" />
      <path d="M12 3 14 5 13 12" fill="none" stroke="#56616e" />
    </svg>
    <h1 className="flex-1 text-xs font-bold text-white">modo</h1>
    <div className="flex gap-0.5">
      <button type="button" aria-label="Minimize" className="size-[21px] rounded-[3px] border border-white bg-linear-to-br from-[#7da5f5] to-[#1b52d8]">
        <svg viewBox="0 0 19 19"><path d="M4 14H11" stroke="#fff" strokeWidth="3" /></svg>
      </button>
      <button type="button" aria-label="Maximize" className="size-[21px] rounded-[3px] border border-white bg-linear-to-br from-[#7da5f5] to-[#1b52d8]">
        <svg viewBox="0 0 19 19"><path d="M4.500 5V14.500H14.500V5M4 5H15" fill="none" stroke="#fff" strokeWidth="1.500" /><path d="M4 5H15" stroke="#fff" strokeWidth="3" /></svg>
      </button>
      <button type="button" aria-label="Close" className="size-[21px] rounded-[3px] border border-white bg-linear-to-br from-[#ef8d78] to-[#cf3c24]">
        <svg viewBox="0 0 19 19"><path d="M5 5 14 14M14 5 5 14" stroke="#fff" strokeWidth="2.500" /></svg>
      </button>
    </div>
  </header>
);

export default function App() {
  return (
    <div className="flex h-screen min-h-[640px] flex-col overflow-hidden bg-[#0054e3] font-['Open_Sans','Noto_Sans_CJK_JP',sans-serif] [font-feature-settings:'palt']">
      <TitleBar />
      <div className="mx-[3px] mb-1 flex min-h-0 flex-1 flex-col">
        <nav className="flex h-5 shrink-0 items-center gap-[13px] bg-[#ece9d8] px-1.5 text-[11px] text-black">
          {menus.map((menu) => (
            <button key={menu} type="button" className="whitespace-nowrap">{menu}</button>
          ))}
        </nav>
        <div className="flex min-h-0 flex-1">
          <LeftPanel />
          <UvView />
          <RightPanel />
        </div>
      </div>
    </div>
  );
}
